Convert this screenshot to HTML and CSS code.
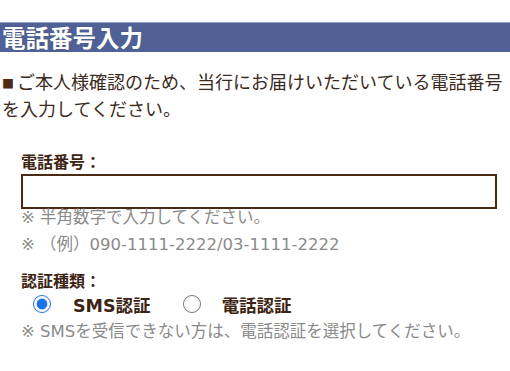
FILE: index.html
```html
<!DOCTYPE html>
<html lang="ja">
<head>
<meta charset="utf-8">
<title>電話番号入力</title>
<link rel="stylesheet" href="styles.css">
</head>
<body>
<h1 class="page-title">電話番号入力</h1>
<p class="intro">ご本人様確認のため、当行にお届けいただいている電話番号を入力してください。</p>
<div class="form">
  <div class="field-label">電話番号：</div>
  <input class="tel-input" type="text">
  <p class="hint">※ 半角数字で入力してください。</p>
  <p class="hint hint-example">※ （例）090-1111-2222/03-1111-2222</p>
  <div class="field-label auth-label">認証種類：</div>
  <div class="radio-row">
    <label class="radio-item"><input class="radio" type="radio" name="auth" checked><span>SMS認証</span></label>
    <label class="radio-item"><input class="radio" type="radio" name="auth"><span>電話認証</span></label>
  </div>
  <p class="hint note">※ SMSを受信できない方は、電話認証を選択してください。</p>
</div>
</body>
</html>
```
FILE: styles.css
```css
html, body {
  margin: 0;
  padding: 0;
  background: #fff;
}
body {
  width: 510px;
  font-family: "DejaVu Sans", "Noto Sans CJK JP", sans-serif;
  color: #3b2a1e;
}
.page-title {
  margin: 22px 0 0;
  height: 30px;
  box-sizing: border-box;
  border-top: 1px solid #9aa4c2;
  background: #4f6196;
  color: #fff;
  font-family: "Noto Sans CJK JP", sans-serif;
  font-size: 23.5px;
  font-weight: 700;
  line-height: 28px;
  padding-left: 2px;
  text-shadow: 0 0 1px rgba(0,0,0,0.35);
}
.intro {
  margin: 17px 0 0;
  padding: 0 4px 0 2px;
  font-family: "Noto Sans CJK JP", sans-serif;
  font-size: 18px;
  line-height: 25px;
  color: #3b2a1e;
}
.intro::before {
  content: "■";
  display: inline-block;
  width: 15px;
  font-size: 12px;
  color: #4e2a14;
}
.form {
  padding: 0 13px 0 21px;
  margin-top: 30px;
}
.field-label {
  font-family: "Noto Sans CJK JP", sans-serif;
  font-size: 16px;
  font-weight: 700;
  line-height: 20px;
  color: #3d2412;
}
.tel-input {
  display: block;
  width: 100%;
  box-sizing: border-box;
  height: 35px;
  margin-top: 3px;
  border: 2px solid #4a2a14;
  border-radius: 0;
  background: #fff;
  padding: 0 6px;
  font-size: 16px;
  outline: none;
}
.hint {
  margin: 0;
  font-size: 16.5px;
  line-height: 18px;
  color: #8a8a8a;
}
.hint-example {
  margin-top: 9px;
}
.auth-label {
  margin-top: 16px;
}
.radio-row {
  display: flex;
  align-items: center;
  height: 24px;
  margin-top: 2px;
  padding-left: 12px;
  gap: 32px;
}
.radio-item {
  display: flex;
  align-items: center;
  gap: 22px;
  font-size: 17.5px;
  font-weight: 700;
  color: #3d2412;
}
.radio-item + .radio-item {
  gap: 21px;
}
.radio {
  width: 18px;
  height: 18px;
  margin: 0;
  accent-color: #1a73e8;
}
.note {
  margin-top: 7px;
}
```
